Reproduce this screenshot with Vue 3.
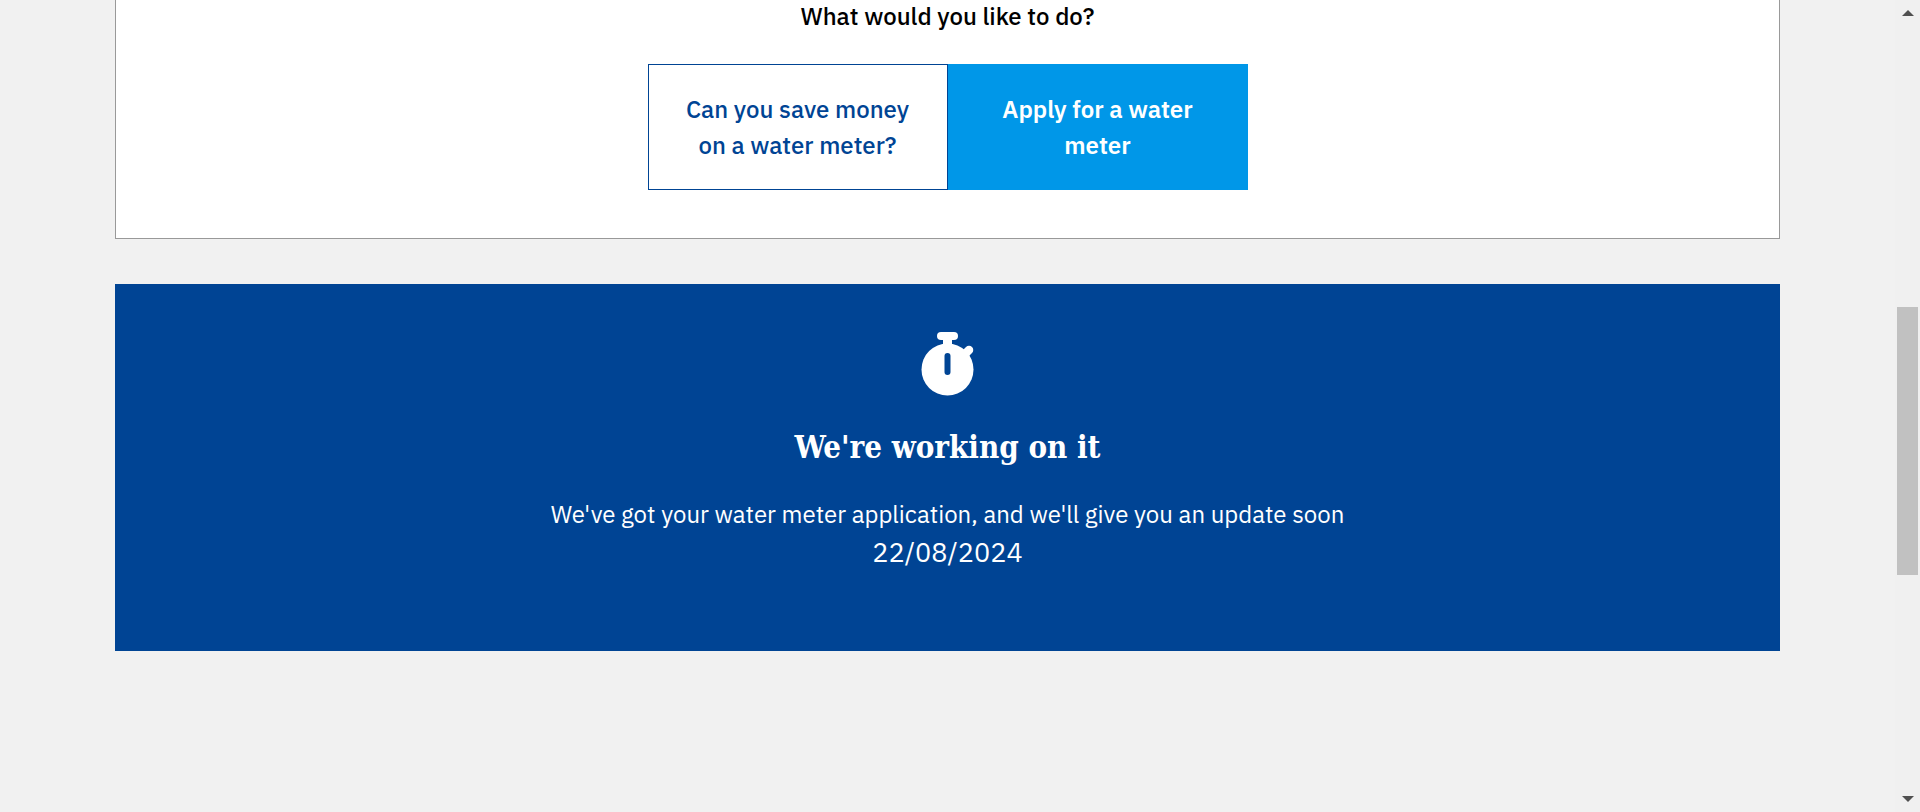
<script setup>
const status = {
  title: "We're working on it",
  message: "We've got your water meter application, and we'll give you an update soon",
  date: '22/08/2024',
}
</script>

<template>
  <div class="page">
    <main class="content">
      <section class="card options">
        <h2 class="question">What would you like to do?</h2>
        <div class="choices">
          <button type="button" class="choice">Can you save money on a water meter?</button>
          <button type="button" class="choice selected">Apply for a water meter</button>
        </div>
      </section>

      <section class="card status">
        <svg class="stopwatch" viewBox="0 0 54 64" aria-hidden="true">
          <g fill="#fff">
            <rect x="16" y="0" width="21" height="8" rx="4" />
            <rect x="22" y="6" width="9" height="9" />
            <circle cx="26.500" cy="37.500" r="26" />
          </g>
          <path d="M42 24L48 18" stroke="#fff" stroke-width="8.500" stroke-linecap="round" />
          <path d="M26.500 24V40" stroke="#004494" stroke-width="6" stroke-linecap="round" />
        </svg>
        <h2 class="title">{{ status.title }}</h2>
        <p class="message">{{ status.message }}</p>
        <p class="date">{{ status.date }}</p>
      </section>
    </main>

    <div class="scrollbar" aria-hidden="true">
      <svg class="arrow" viewBox="0 0 12 6"><path d="M6 0L12 6H0Z" fill="#505050" /></svg>
      <div class="track"><div class="thumb"></div></div>
      <svg class="arrow" viewBox="0 0 12 6"><path d="M0 0H12L6 6Z" fill="#505050" /></svg>
    </div>
  </div>
</template>

<style>
body {
  background: #f1f1f1;
}
</style>

<style scoped>
.page {
  display: flex;
  height: 100vh;
  overflow: hidden;
  background: #f1f1f1;
  font-family: "IBM Plex Sans", "Noto Sans", sans-serif;
  font-size: 24px;
}

.content {
  flex: 1;
  display: flex;
  flex-direction: column;
  gap: 45px;
  padding: 0 115px;
}

.card {
  display: flex;
  flex-direction: column;
  align-items: center;
  text-align: center;
}

.options {
  padding-bottom: 48px;
  background: #fff;
  border: 1px solid #999;
  border-top: 0;
}

.question {
  margin: 0 0 32px;
  font-size: 24px;
  font-weight: 500;
  line-height: 32px;
  color: #000;
}

.choices {
  display: flex;
}

.choice {
  width: 300px;
  padding: 26px 28px;
  border: 1px solid #004494;
  background: #fff;
  color: #004494;
  font-family: inherit;
  font-size: 24px;
  font-weight: 500;
  line-height: 36px;
  cursor: pointer;
}

.choice.selected {
  border-color: #0097e8;
  background: #0097e8;
  color: #fff;
  font-weight: 600;
}

.status {
  padding: 48px 32px 80px;
  background: #004494;
  color: #fff;
}

.stopwatch {
  width: 54px;
  height: 64px;
  fill: none;
}

.title {
  margin: 27px 0 23px;
  font-family: "Roboto Slab", "DejaVu Serif Condensed", "DejaVu Serif", serif;
  font-size: 31px;
  font-weight: 700;
  line-height: 49px;
}

.message,
.date {
  margin: 0;
  line-height: 38px;
}

.date {
  font-size: 27px;
}

.scrollbar {
  display: flex;
  flex-direction: column;
  align-items: center;
  gap: 8px;
  width: 25px;
  padding: 10px 0;
  box-sizing: border-box;
  background: #f0f0f0;
}

.arrow {
  width: 12px;
  height: 6px;
}

.track {
  flex: 1;
  width: 21px;
  display: grid;
  grid-template-rows: 283fr 268fr 213fr;
}

.thumb {
  grid-row: 2;
  background: #c1c1c1;
}
</style>
